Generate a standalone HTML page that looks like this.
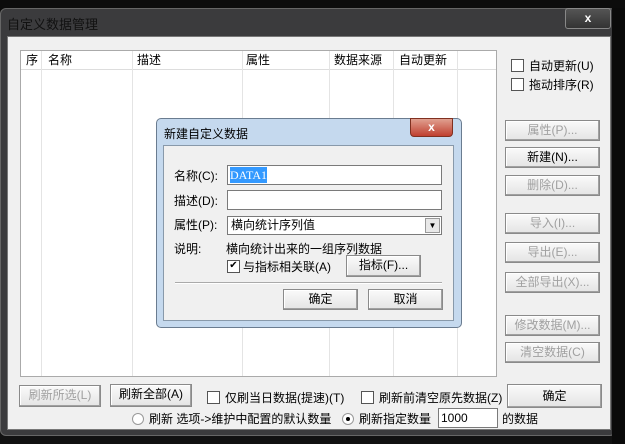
<!DOCTYPE html><html><head><meta charset="utf-8"><style>
body{margin:0;width:625px;height:444px;overflow:hidden;background:#111;font-family:"Liberation Sans","Noto Sans CJK SC",sans-serif;font-size:12px;position:relative}
.a{position:absolute}
.btn{position:absolute;background:linear-gradient(#fafafa,#e4e4e4);border:1px solid #8a8a8a;box-shadow:inset -1px -1px 0 #a0a0a0,inset 1px 1px 0 #fff;text-align:center;color:#000;box-sizing:border-box;line-height:18px}
.dis{color:#a0a0a0}
.cb{position:absolute;width:11px;height:11px;border:1px solid #555;background:#fff}
.inp{position:absolute;background:#fff;border:1px solid #7a7a7a;box-sizing:border-box}
</style></head><body>
<div class="a" style="left:0;top:0;width:625px;height:10px;background:#0c0c0c"></div>
<div class="a" style="left:0;top:8px;width:616px;height:428px;background:#3b3b3d;border:1px solid #666;border-radius:6px;box-sizing:border-box"></div>
<div class="a" style="left:7px;top:14px;color:#111;font-size:13px">自定义数据管理</div>
<div class="a" style="left:565px;top:8px;width:44px;height:19px;border:1px solid #888;border-radius:3px;background:linear-gradient(#555,#333);color:#fff;text-align:center;font-weight:bold;line-height:18px">x</div>
<div class="a" style="left:612px;top:8px;width:13px;height:436px;background:#0a0a0a"></div>
<div class="a" style="left:7px;top:36px;width:604px;height:394px;background:#f0f0f0;border:1px solid #777;box-sizing:border-box"></div>
<div class="a" style="left:20px;top:50px;width:477px;height:327px;background:#fff;border:1px solid #aaa;box-sizing:border-box"></div>
<div class="a" style="left:21px;top:51px;width:475px;height:18px;border-bottom:1px solid #ddd;font-size:12px;line-height:18px">
<span class="a" style="left:5px">序</span><span class="a" style="left:27px">名称</span><span class="a" style="left:116px">描述</span><span class="a" style="left:225px">属性</span><span class="a" style="left:313px">数据来源</span><span class="a" style="left:378px">自动更新</span></div>
<div class="a" style="left:41px;top:51px;width:1px;height:325px;background:#e4e4e4"></div>
<div class="a" style="left:132px;top:51px;width:1px;height:325px;background:#e4e4e4"></div>
<div class="a" style="left:242px;top:51px;width:1px;height:325px;background:#e4e4e4"></div>
<div class="a" style="left:329px;top:51px;width:1px;height:325px;background:#e4e4e4"></div>
<div class="a" style="left:393px;top:51px;width:1px;height:325px;background:#e4e4e4"></div>
<div class="a" style="left:457px;top:51px;width:1px;height:325px;background:#e4e4e4"></div>
<div class="cb" style="left:511px;top:59px"></div><div class="a" style="left:529px;top:57px">自动更新(U)</div>
<div class="cb" style="left:511px;top:78px"></div><div class="a" style="left:529px;top:76px">拖动排序(R)</div>
<div class="btn dis" style="left:505px;top:120px;width:95px;height:21px">属性(P)...</div>
<div class="btn" style="left:505px;top:147px;width:95px;height:21px">新建(N)...</div>
<div class="btn dis" style="left:505px;top:175px;width:95px;height:21px">删除(D)...</div>
<div class="btn dis" style="left:505px;top:213px;width:95px;height:21px">导入(I)...</div>
<div class="btn dis" style="left:505px;top:242px;width:95px;height:21px">导出(E)...</div>
<div class="btn dis" style="left:505px;top:272px;width:95px;height:21px">全部导出(X)...</div>
<div class="btn dis" style="left:505px;top:315px;width:95px;height:21px">修改数据(M)...</div>
<div class="btn dis" style="left:505px;top:342px;width:95px;height:21px">清空数据(C)</div>
<div class="btn dis" style="left:19px;top:385px;width:82px;height:22px">刷新所选(L)</div>
<div class="btn" style="left:110px;top:384px;width:82px;height:23px">刷新全部(A)</div>
<div class="cb" style="left:207px;top:391px"></div><div class="a" style="left:225px;top:389px">仅刷当日数据(提速)(T)</div>
<div class="cb" style="left:361px;top:391px"></div><div class="a" style="left:379px;top:389px">刷新前清空原先数据(Z)</div>
<div class="btn" style="left:507px;top:384px;width:95px;height:24px;line-height:22px">确定</div>
<div class="a" style="left:132px;top:413px;width:10px;height:10px;border:1px solid #999;border-radius:50%;background:#fff"></div>
<div class="a" style="left:149px;top:410px">刷新 选项-&gt;维护中配置的默认数量</div>
<div class="a" style="left:342px;top:413px;width:10px;height:10px;border:1px solid #999;border-radius:50%;background:#fff"></div>
<div class="a" style="left:346px;top:417px;width:4px;height:4px;border-radius:50%;background:#000"></div>
<div class="a" style="left:359px;top:410px">刷新指定数量</div>
<div class="inp" style="left:438px;top:408px;width:60px;height:20px;padding-left:2px;line-height:18px">1000</div>
<div class="a" style="left:502px;top:410px">的数据</div>
<!-- inner dialog -->
<div class="a" style="left:156px;top:118px;width:306px;height:210px;background:#c5d9ee;border:1px solid #6a7c90;border-radius:5px;box-sizing:border-box"></div>
<div class="a" style="left:164px;top:125px;font-size:12px">新建自定义数据</div>
<div class="a" style="left:410px;top:118px;width:43px;height:19px;border-radius:0 0 4px 4px;background:linear-gradient(#e0a090,#c04030);border:1px solid #803020;box-sizing:border-box;color:#fff;font-weight:bold;text-align:center;line-height:17px">x</div>
<div class="a" style="left:163px;top:145px;width:291px;height:176px;background:#f0f0f0;border:1px solid #8899aa;box-sizing:border-box"></div>
<div class="a" style="left:174px;top:167px">名称(C):</div>
<div class="inp" style="left:227px;top:165px;width:215px;height:20px"><span style="background:#3399ff;color:#fff;font-family:'Liberation Serif',serif;margin-left:2px;font-size:12px;line-height:16px;display:inline-block;margin-top:1px">DATA1</span></div>
<div class="a" style="left:174px;top:192px">描述(D):</div>
<div class="inp" style="left:227px;top:190px;width:215px;height:20px"></div>
<div class="a" style="left:174px;top:216px">属性(P):</div>
<div class="inp" style="left:227px;top:216px;width:215px;height:19px;padding-left:3px;line-height:17px">横向统计序列值<span class="a" style="right:1px;top:1px;width:15px;height:15px;background:#e8e8e8;border:1px solid #999;box-sizing:border-box;font-size:8px;text-align:center;line-height:13px">▼</span></div>
<div class="a" style="left:174px;top:240px">说明:</div>
<div class="a" style="left:226px;top:240px">横向统计出来的一组序列数据</div>
<div class="cb" style="left:227px;top:260px;font-size:10px;line-height:10px;text-align:center">✔</div>
<div class="a" style="left:243px;top:258px">与指标相关联(A)</div>
<div class="btn" style="left:346px;top:255px;width:75px;height:22px">指标(F)...</div>
<div class="a" style="left:175px;top:282px;width:267px;height:1px;background:#aaa;border-bottom:1px solid #fff"></div>
<div class="btn" style="left:283px;top:289px;width:75px;height:21px">确定</div>
<div class="btn" style="left:368px;top:289px;width:75px;height:21px">取消</div>
</body></html>
